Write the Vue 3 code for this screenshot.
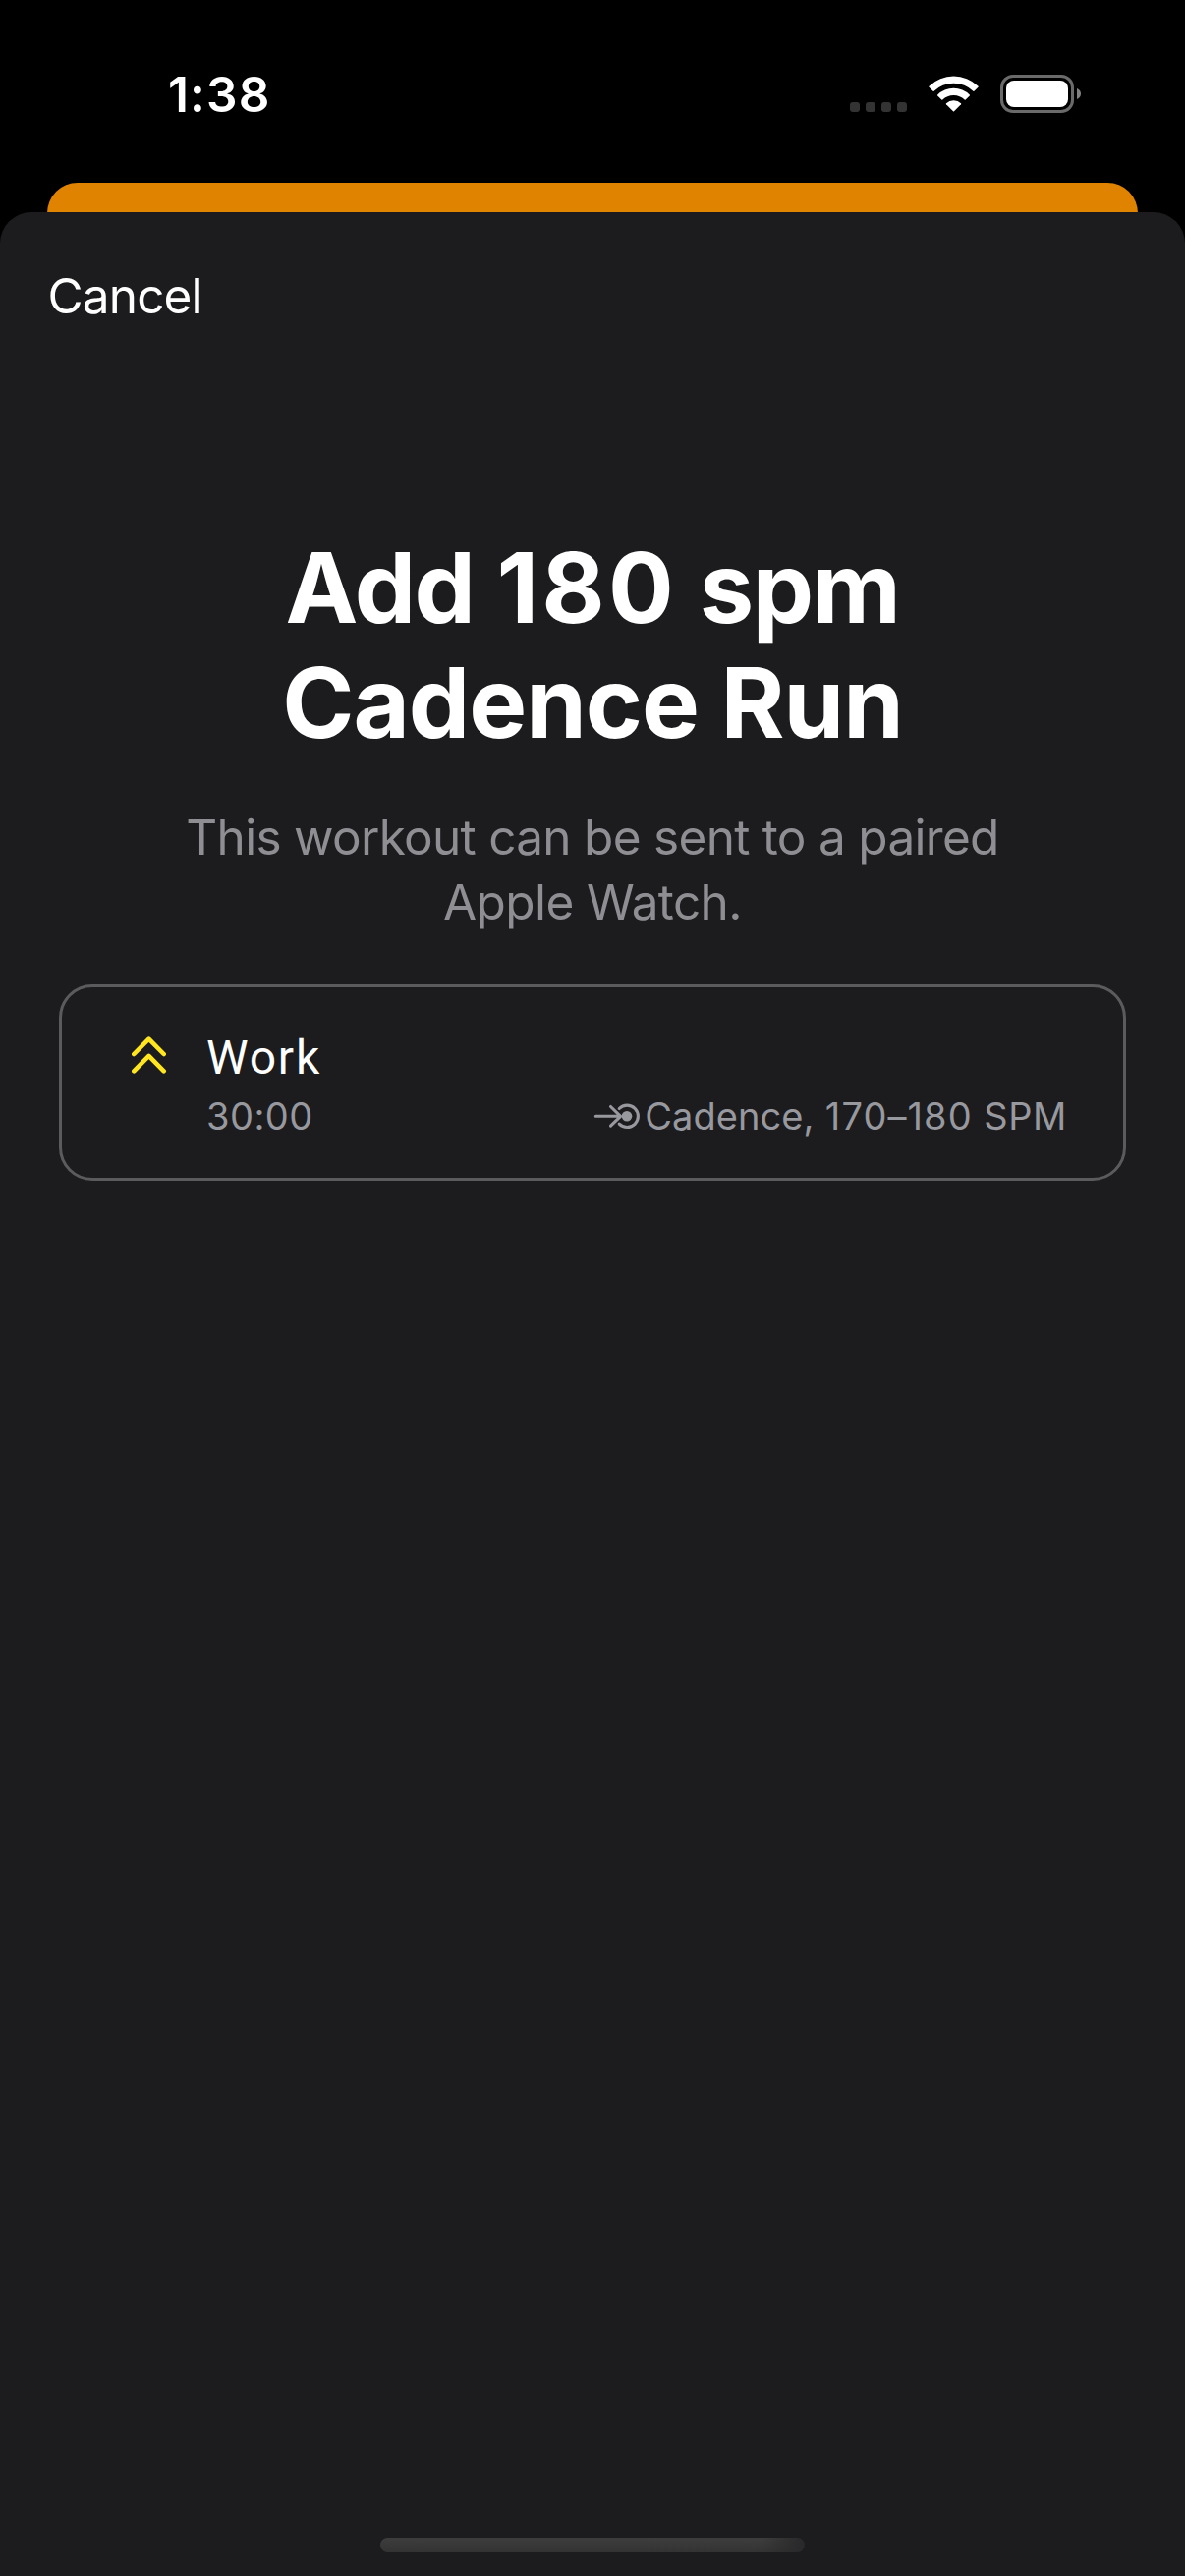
<script setup>
const titleLines = [
  { name: 'first', words: [{ t: 'Add', c: 'tight' }, { t: '180', c: 'loose' }, { t: 'spm', c: 'tight' }] },
  { name: 'second', words: [{ t: 'Cadence', c: '' }, { t: 'Run', c: '' }] },
]
const subtitleLines = [
  { text: 'This workout can be sent to a paired', name: 'wide' },
  { text: 'Apple Watch.', name: 'narrow' },
]
const step = { name: 'Work', duration: '30:00', metric: 'Cadence,', range: '170–180', unit: 'SPM' }
</script>

<template>
  <div class="screen">
    <header class="status">
      <span class="time">1:38</span>
      <div class="indicators">
        <div class="cell"><i v-for="n in 4" :key="n"></i></div>
        <svg class="wifi" viewBox="0 0 51 38" width="51" height="38">
          <path d="M.5 11.7Q0 11.2.5 10.7A36 36 0 0 1 50.500 10.7Q51 11.2 50.500 11.700L46.400 15.800Q45.900 16.300 45.400 15.800A28.500 28.500 0 0 0 5.600 15.800Q5.100 16.300 4.600 15.800Z" />
          <path d="M9.200 20.400Q8.700 19.900 9.200 19.400A23.500 23.500 0 0 1 41.800 19.400Q42.300 19.900 41.800 20.400L37.700 24.500Q37.200 25 36.700 24.500A16 16 0 0 0 14.300 24.500Q13.800 25 13.300 24.500Z" />
          <path d="M18 29.200Q17.500 28.700 18 28.200A11 11 0 0 1 33 28.200Q33.500 28.700 33 29.200L26 36.200Q25.500 36.700 25 36.200Z" />
        </svg>
        <div class="battery"><div class="shell"><b></b></div><svg width="5" height="11" viewBox="0 0 5 11"><path d="M0 0Q4 1.800 4 5.500T0 11Z" /></svg></div>
      </div>
    </header>

    <div class="behind"></div>
    <main class="sheet">
      <nav class="bar"><span class="cancel">Cancel</span></nav>
      <h1 class="title">
        <span v-for="l in titleLines" :key="l.name" class="line" :class="l.name">
          <template v-for="(w, i) in l.words" :key="w.t">{{ i ? ' ' : '' }}<span :class="w.c">{{ w.t }}</span></template>
        </span>
      </h1>
      <p class="subtitle">
        <span v-for="l in subtitleLines" :key="l.name" class="line" :class="l.name">{{ l.text }}</span>
      </p>
      <section class="card">
        <svg class="chevrons" width="36" height="38" viewBox="0 0 36 38">
          <path d="M2.300 18L17.500 2.600L32.700 18M2.300 35.300L17.500 19.900L32.700 35.300" />
        </svg>
        <div class="details">
          <div class="name">{{ step.name }}</div>
          <div class="meta">
            <span class="duration">{{ step.duration }}</span>
            <span class="goal">
              <svg width="48" height="28" viewBox="0 0 48 28">
                <path d="M2.300 14.300H27M17.500 4.500L27.600 14.300L17.500 24.200M26.200 6.500A11.200 11.200 0 1 1 26.200 22.200" />
                <circle cx="34" cy="14.300" r="5.300" />
              </svg>
              <span class="goal-text"><span class="metric">{{ step.metric }}</span> <span class="range">{{ step.range }}</span> {{ step.unit }}</span>
            </span>
          </div>
        </div>
      </section>
      <div class="home"></div>
    </main>
  </div>
</template>

<style>
body {
  background: #000;
}
</style>

<style scoped>
.screen {
  width: 1206px;
  height: 2622px;
  display: flex;
  flex-direction: column;
  overflow: hidden;
  background: #000;
  color: #fff;
  font-family: Inter, "Liberation Sans", sans-serif;
}
.status {
  height: 186px;
  box-sizing: border-box;
  padding: 66px 105px 0 171px;
  display: flex;
  justify-content: space-between;
  align-items: flex-start;
}
.time {
  font-size: 49.5px;
  line-height: 60px;
  font-weight: 600;
  letter-spacing: 1.16px;
}
.indicators {
  display: flex;
  padding-top: 10px;
}
.cell {
  display: flex;
  gap: 6px;
  padding-top: 28px;
  margin-right: 22px;
}
.cell i {
  width: 10px;
  height: 10px;
  border-radius: 3px;
  background: #333;
}
.wifi {
  margin: 0 22px 0 0;
  padding-top: 1px;
  fill: #fff;
}
.battery {
  display: flex;
  align-items: center;
  gap: 3px;
  height: 39px;
}
.battery svg {
  fill: #808080;
}
.shell {
  width: 75px;
  height: 39px;
  box-sizing: border-box;
  border: 3px solid #6a6a6a;
  border-radius: 13px;
  padding: 3px;
  display: flex;
}
.shell b {
  flex: 1;
  border-radius: 8px;
  background: #fff;
}
.behind {
  height: 62px;
  margin: 0 48px -32px;
  flex: none;
  border-radius: 31px 31px 0 0;
  background: linear-gradient(#df8300 30px, #000 30px);
}
.sheet {
  flex: 1;
  display: flex;
  flex-direction: column;
  border-radius: 32px 32px 0 0;
  background: #1c1c1e;
}
.bar {
  height: 324px;
  box-sizing: border-box;
  padding: 55px 0 0 48.5px;
}
.cancel {
  display: block;
  font-size: 49.5px;
  line-height: 60px;
  letter-spacing: -0.85px;
}
.title {
  margin: 0;
  font-size: 99px;
  line-height: 117px;
  font-weight: 700;
  text-align: center;
}
.line {
  display: block;
}
.first {
  word-spacing: -0.6px;
}
.tight {
  letter-spacing: -1.5px;
}
.loose {
  letter-spacing: 3.2px;
}
.second {
  letter-spacing: -1px;
}
.subtitle {
  margin: 45px 0 51px;
  font-size: 49.5px;
  line-height: 66px;
  text-align: center;
  color: #8e8e93;
}
.wide {
  letter-spacing: -0.71px;
}
.narrow {
  letter-spacing: -0.6px;
}
.card {
  height: 200px;
  box-sizing: border-box;
  margin: 0 60px;
  padding: 42px 57px 0 71px;
  border: 3px solid #5b5b5d;
  border-radius: 34px;
  display: flex;
  align-items: flex-start;
}
.chevrons {
  margin: 8px 40px 0 0;
  fill: none;
  stroke: #ffe620;
  stroke-width: 4.6;
  stroke-linecap: round;
  stroke-linejoin: round;
}
.details {
  flex: 1;
}
.name {
  font-family: Roboto, "Noto Sans", sans-serif;
  font-size: 48px;
  line-height: 60px;
  letter-spacing: 1.8px;
}
.meta {
  display: flex;
  justify-content: space-between;
  margin-top: 6px;
  font-size: 38px;
  line-height: 46px;
  color: #98989f;
}
.duration {
  letter-spacing: 0.48px;
}
.goal {
  display: flex;
}
.goal svg {
  margin: 9px 4.5px 0 0;
  fill: none;
  stroke: #98989f;
  stroke-width: 3.1;
  stroke-linecap: round;
  stroke-linejoin: round;
}
.goal circle {
  fill: #98989f;
  stroke: none;
}
.goal-text {
  letter-spacing: 0.63px;
}
.metric {
  letter-spacing: 0.05px;
}
.range {
  letter-spacing: 1.1px;
}
.home {
  width: 432px;
  height: 15px;
  margin: auto auto 24px;
  border-radius: 8px;
  background: linear-gradient(90deg, transparent 90%, #28282a), linear-gradient(#3d3d3d, #333);
}
</style>
